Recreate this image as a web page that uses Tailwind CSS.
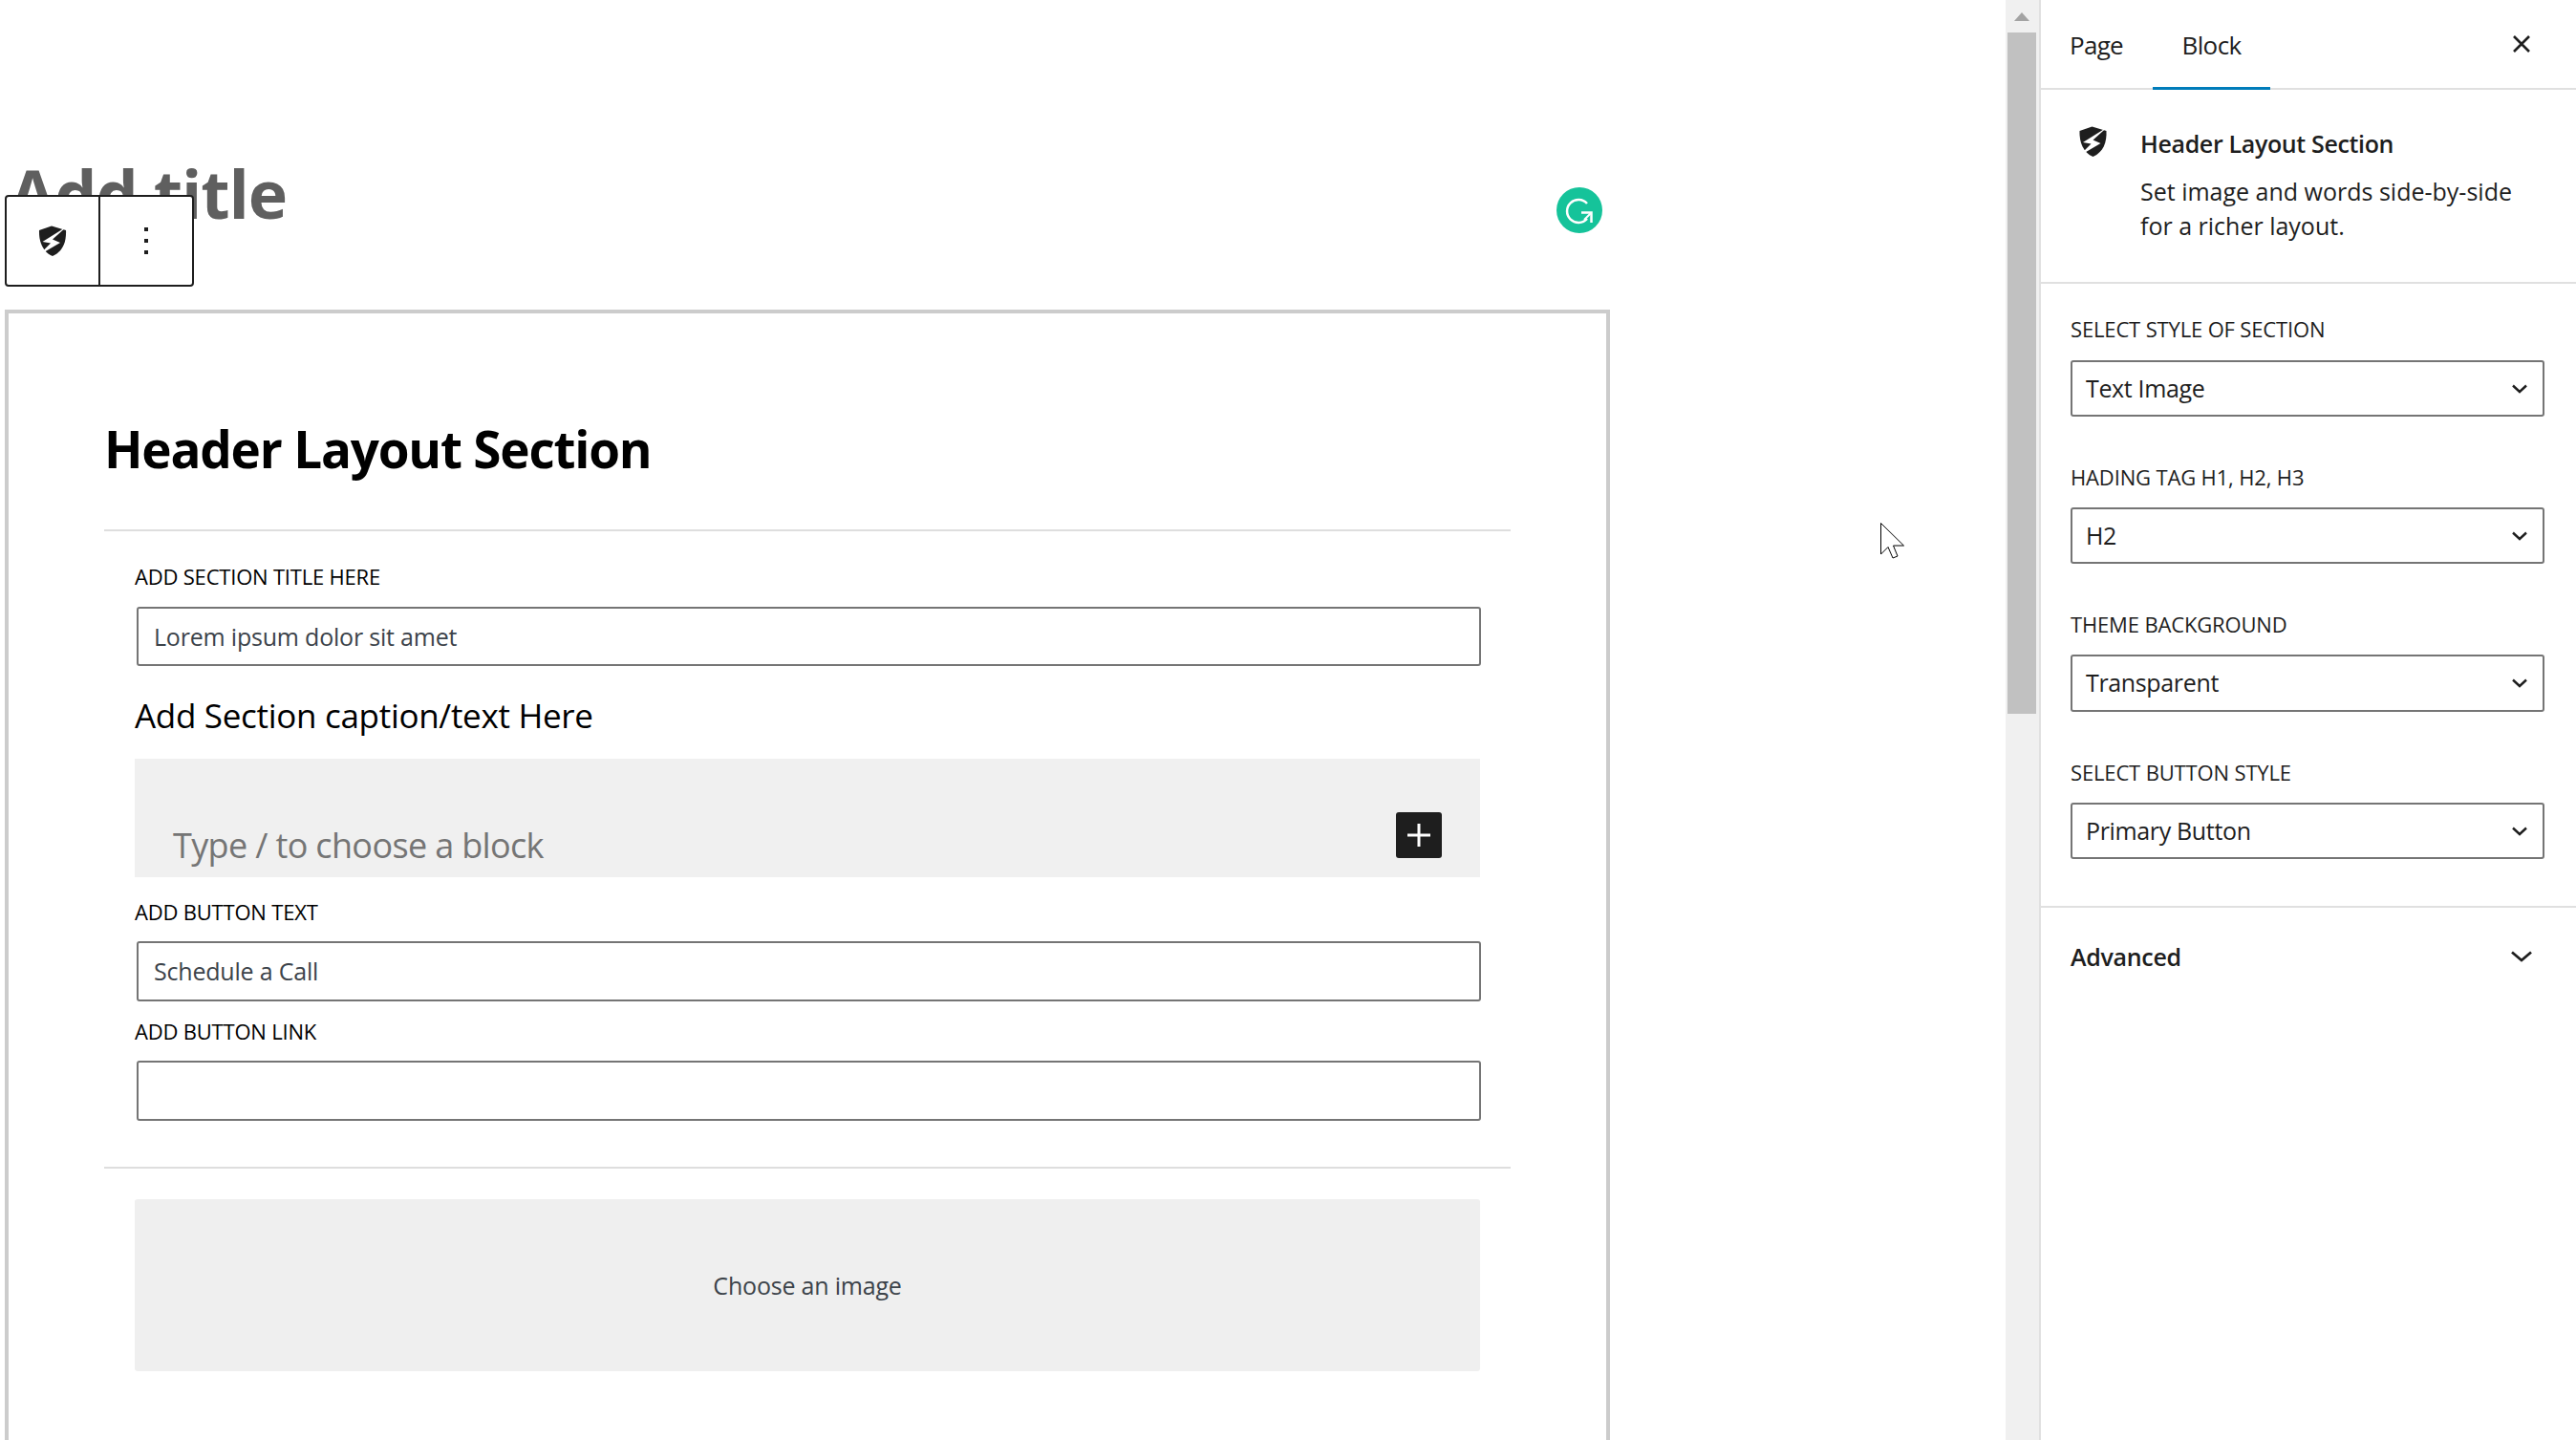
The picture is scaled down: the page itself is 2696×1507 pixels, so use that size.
<!DOCTYPE html>
<html lang="en">
<head>
  <meta charset="UTF-8" />
  <title>Header Layout Section</title>
  <script src="https://cdn.jsdelivr.net/npm/@tailwindcss/browser@4"></script>
</head>
<body class="bg-white font-['Open_Sans',sans-serif] text-[#1e1e1e]">
  <div class="relative flex h-[1507px] w-[2696px] overflow-hidden">

    <!-- editor canvas -->
    <main class="relative w-[2099px] shrink-0">
      <h1 class="pl-[10px] pt-[156px] text-[70px] leading-[92px] font-bold tracking-[-1.100px] text-[#5f5f5f]">Add title</h1>

      <!-- block toolbar -->
      <div class="absolute left-[5px] top-[204px] flex h-[96px] w-[198px] rounded-[4px] border-2 border-[#1e1e1e] bg-white">
        <div class="flex w-[98px] items-center justify-center border-r-2 border-[#1e1e1e]">
          <svg class="h-[33px] w-[30px]" viewBox="0 0 30 33">
            <path fill="#1e1e1e" d="M14 .500 L29 5 C29.500 17 26 27 15 32 C5 28 .500 17 1 5 Z"/>
            <path fill="#fff" d="M30 1 L4.500 17 L13 18.500 L0 31.500 L23 18 L15 14.500 Z"/>
          </svg>
        </div>
        <div class="flex flex-1 flex-col items-center justify-center gap-[8px]">
          <span class="h-[4px] w-[4px] bg-[#1e1e1e]"></span>
          <span class="h-[4px] w-[4px] bg-[#1e1e1e]"></span>
          <span class="h-[4px] w-[4px] bg-[#1e1e1e]"></span>
        </div>
      </div>

      <!-- grammarly -->
      <div class="absolute left-[1629px] top-[196px] flex h-[48px] w-[48px] items-center justify-center rounded-full bg-[#15c39a]">
        <svg class="h-[30px] w-[30px]" viewBox="0 0 30 30" fill="none" stroke="#fff" stroke-width="2.500">
          <path d="M23 8 A12 12 0 1 0 23 24"/>
          <path d="M17 17.500 H27.500 V28"/>
          <path d="M27 18 L20 25" stroke-width="2"/>
        </svg>
      </div>

      <section class="mt-[76px] ml-[5px] h-[1300px] w-[1680px] border-4 border-[#ccc] px-[100px]">
        <h2 class="pt-[106px] text-[53px] leading-[72px] font-bold tracking-[-1.200px] text-black">Header Layout Section</h2>
        <hr class="mt-[48px] border-0 border-t-2 border-[#dedede]" />

        <div class="px-[32px]">
          <label class="mt-[32px] block text-[22px] leading-[30px] font-medium tracking-[-0.200px] text-black">ADD SECTION TITLE HERE</label>
          <div class="mt-[17px] ml-[2px] -mr-px flex h-[62px] items-center rounded-[3px] border-2 border-[#757575] pl-[16px] pt-[2px] text-[25px] tracking-[-0.200px] text-[#3c434a]">Lorem ipsum dolor sit amet</div>
          <p class="mt-[28px] text-[35px] leading-[48px] tracking-[-0.300px] text-black">Add Section caption/text Here</p>
          <div class="relative mt-[21px] flex h-[124px] items-end bg-[#f0f0f0] pb-[9px] pl-[40px] text-[36px] leading-[48px] tracking-[-0.650px] text-[#757575]">
            Type / to choose a block
            <span class="absolute left-[1320px] top-[56px] flex h-[48px] w-[48px] items-center justify-center rounded-[3px] bg-[#1e1e1e]">
              <svg class="h-[24px] w-[24px]" viewBox="0 0 24 24"><path fill="#fff" d="M10.500 0h3v10.500H24v3H13.500V24h-3V13.500H0v-3h10.500z"/></svg>
            </span>
          </div>
          <label class="mt-[21px] block text-[22px] leading-[30px] font-medium tracking-[-0.200px] text-black">ADD BUTTON TEXT</label>
          <div class="mt-[16px] ml-[2px] -mr-px flex h-[63px] items-center rounded-[3px] border-2 border-[#757575] pl-[16px] pt-[1px] text-[25px] tracking-[-0.200px] text-[#3c434a]">Schedule a Call</div>
          <label class="mt-[16px] block text-[22px] leading-[30px] font-medium tracking-[-0.200px] text-black">ADD BUTTON LINK</label>
          <div class="mt-[16px] ml-[2px] -mr-px h-[63px] rounded-[3px] border-2 border-[#757575]"></div>
        </div>

        <hr class="mt-[48px] border-0 border-t-2 border-[#dedede]" />
        <div class="mx-[32px] mt-[32px] flex h-[180px] w-[1408px] items-center justify-center rounded-[3px] bg-[#efefef] pt-[2px] text-[25px] tracking-[-0.200px] text-[#3c434a]">Choose an image</div>
      </section>
    </main>

    <!-- scrollbar -->
    <div class="w-[35px] shrink-0 bg-[#f0f0f0] pl-[2px] pr-[3px]">
      <div class="flex h-[34px] items-start justify-center pt-[13px]">
        <span class="h-0 w-0 border-x-[8px] border-b-[9px] border-x-transparent border-b-[#a3a3a3]"></span>
      </div>
      <div class="h-[713px] bg-[#c1c1c1]"></div>
    </div>

    <!-- settings sidebar -->
    <aside class="flex-1 border-l-2 border-[#e0e0e0]">
      <div class="relative flex h-[94px] border-b-2 border-[#e0e0e0] pl-[30px]">
        <span class="pt-[29px] text-[26px] leading-[36px] font-medium tracking-[-0.700px]">Page</span>
        <span class="relative ml-[31px] w-[123px] pt-[29px] text-center text-[26px] leading-[36px] font-medium tracking-[-0.600px]">
          Block
          <span class="absolute bottom-[-2px] left-0 h-[3px] w-full bg-[#007cba]"></span>
        </span>
        <svg class="absolute left-[493px] top-[36px] h-[20px] w-[20px]" viewBox="0 0 20 20" fill="none" stroke="#1e1e1e" stroke-width="2.600"><path d="M2 2 18 18M18 2 2 18"/></svg>
      </div>

      <div class="flex h-[203px] border-b-2 border-[#e0e0e0] pl-[39px] pt-[38px]">
        <svg class="h-[33px] w-[31px] shrink-0" viewBox="0 0 30 33">
          <path fill="#1e1e1e" d="M14 .500 L29 5 C29.500 17 26 27 15 32 C5 28 .500 17 1 5 Z"/>
          <path fill="#fff" d="M30 1 L4.500 17 L13 18.500 L0 31.500 L23 18 L15 14.500 Z"/>
        </svg>
        <div class="ml-[34px]">
          <h3 class="text-[25px] leading-[36px] font-semibold tracking-[-0.350px]">Header Layout Section</h3>
          <p class="mt-[14px] w-[400px] text-[25px] leading-[36px] text-[#1e1e1e]">Set image and words side-by-side for a richer layout.</p>
        </div>
      </div>

      <div class="h-[653px] border-b-2 border-[#e0e0e0] pl-[31px] pr-[33px] pt-[32px]">
        <label class="block text-[22px] leading-[30px] font-medium tracking-[-0.150px]">SELECT STYLE OF SECTION</label>
        <div class="mt-[18px] flex h-[59px] items-center justify-between rounded-[3px] border-2 border-[#757575] pl-[14px] pr-[16px] text-[25px] tracking-[-0.350px]">
          Text Image
          <svg class="h-[10px] w-[16px]" viewBox="0 0 16 10" fill="none" stroke="#1e1e1e" stroke-width="2.400"><path d="M1 1.500 8 8 15 1.500"/></svg>
        </div>
        <label class="mt-[48px] block text-[22px] leading-[30px] font-medium tracking-[-0.150px]">HADING TAG H1, H2, H3</label>
        <div class="mt-[17px] flex h-[59px] items-center justify-between rounded-[3px] border-2 border-[#757575] pl-[14px] pr-[16px] text-[25px] tracking-[-0.350px]">
          H2
          <svg class="h-[10px] w-[16px]" viewBox="0 0 16 10" fill="none" stroke="#1e1e1e" stroke-width="2.400"><path d="M1 1.500 8 8 15 1.500"/></svg>
        </div>
        <label class="mt-[48px] block text-[22px] leading-[30px] font-medium tracking-[-0.150px]">THEME BACKGROUND</label>
        <div class="mt-[17px] flex h-[60px] items-center justify-between rounded-[3px] border-2 border-[#757575] pl-[14px] pr-[16px] text-[25px] tracking-[-0.350px]">
          Transparent
          <svg class="h-[10px] w-[16px]" viewBox="0 0 16 10" fill="none" stroke="#1e1e1e" stroke-width="2.400"><path d="M1 1.500 8 8 15 1.500"/></svg>
        </div>
        <label class="mt-[48px] block text-[22px] leading-[30px] font-medium tracking-[-0.150px]">SELECT BUTTON STYLE</label>
        <div class="mt-[17px] flex h-[59px] items-center justify-between rounded-[3px] border-2 border-[#757575] pl-[14px] pr-[16px] text-[25px] tracking-[-0.350px]">
          Primary Button
          <svg class="h-[10px] w-[16px]" viewBox="0 0 16 10" fill="none" stroke="#1e1e1e" stroke-width="2.400"><path d="M1 1.500 8 8 15 1.500"/></svg>
        </div>
      </div>

      <div class="flex items-center justify-between pl-[31px] pr-[46px] pt-[33px]">
        <span class="text-[25px] leading-[36px] font-semibold tracking-[-0.300px]">Advanced</span>
        <svg class="h-[12px] w-[22px]" viewBox="0 0 22 12" fill="none" stroke="#1e1e1e" stroke-width="2.800"><path d="M1 1.500 11 10 21 1.500"/></svg>
      </div>
    </aside>

    <!-- mouse pointer -->
    <svg class="absolute left-[1967px] top-[546px] h-[40px] w-[27px]" viewBox="0 0 27 40">
      <path fill="#fff" stroke="#000" stroke-width="1" d="M1.500 1.500 V34 L9 26.500 L14 38 L19 36 L14.500 25 H25.500 Z"/>
    </svg>
  </div>
</body>
</html>
